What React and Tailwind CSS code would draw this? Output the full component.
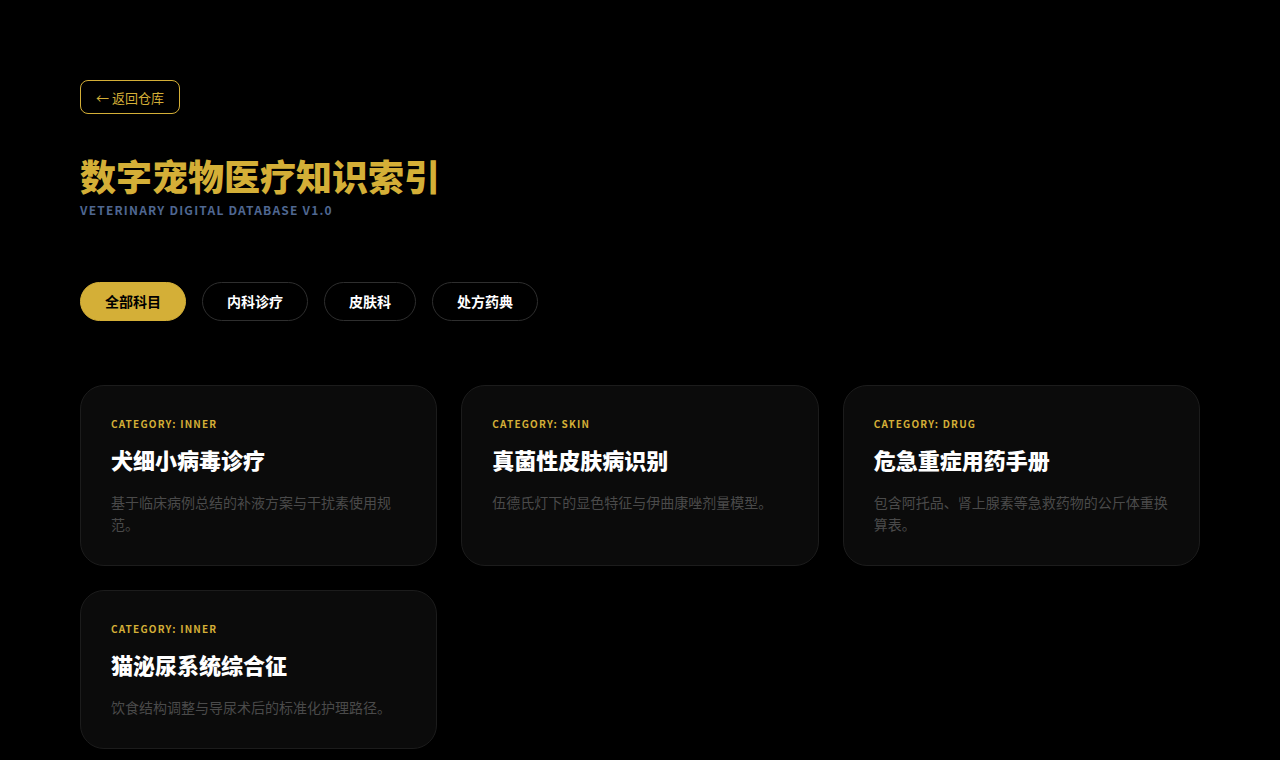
import React, { useState } from 'react';

const filters = ['全部科目', '内科诊疗', '皮肤科', '处方药典'];

const records = [
  { cat: 'INNER', title: '犬细小病毒诊疗', desc: '基于临床病例总结的补液方案与干扰素使用规范。' },
  { cat: 'SKIN', title: '真菌性皮肤病识别', desc: '伍德氏灯下的显色特征与伊曲康唑剂量模型。' },
  { cat: 'DRUG', title: '危急重症用药手册', desc: '包含阿托品、肾上腺素等急救药物的公斤体重换算表。' },
  { cat: 'INNER', title: '猫泌尿系统综合征', desc: '饮食结构调整与导尿术后的标准化护理路径。' },
];

const App = () => {
  const [active, setActive] = useState(0);

  return (
    <main className="min-h-screen bg-black font-['Noto_Sans_CJK_SC','Noto_Sans',sans-serif]">
      <div className="px-20 pt-20 pb-10">
        {/* back link */}
        <button className="h-[34px] px-[15px] rounded-lg border border-[#d4af37] text-[#d4af37] text-[13px] leading-none">
          ← 返回仓库
        </button>

        {/* header */}
        <header className="mt-[41px]">
          <h1 className="text-[36px] leading-[40px] font-black text-[#d4af37]">数字宠物医疗知识索引</h1>
          <p className="mt-[7px] text-[12px] leading-[16px] font-semibold tracking-[1.2px] text-[#4f6791]">
            VETERINARY DIGITAL DATABASE V1.0
          </p>
        </header>

        {/* filters */}
        <nav className="mt-[64px] flex gap-4">
          {filters.map((f, i) => (
            <button
              key={f}
              onClick={() => setActive(i)}
              className={
                i === active
                  ? 'h-[39px] px-6 rounded-full border border-[#d4af37] bg-[#d4af37] text-black text-[14px] font-bold'
                  : 'h-[39px] px-6 rounded-full border border-[#2e2e2e] bg-black text-white text-[14px] font-bold'
              }
            >
              {f}
            </button>
          ))}
        </nav>

        {/* cards */}
        <section className="mt-[64px] grid grid-cols-3 gap-6">
          {records.map((r) => (
            <article key={r.title} className="rounded-3xl border border-[#1c1c1c] bg-[#0b0b0b] p-[30px]">
              <div className="text-[10px] leading-[15px] font-bold tracking-[1.2px] text-[#d4af37]">
                CATEGORY: {r.cat}
              </div>
              <h2 className="mt-[14px] text-[22px] leading-[29px] font-black text-white">{r.title}</h2>
              <p className="mt-[17px] text-[14px] leading-[22px] text-[#4a4a4a]">{r.desc}</p>
            </article>
          ))}
        </section>
      </div>
    </main>
  );
};

export default App;
